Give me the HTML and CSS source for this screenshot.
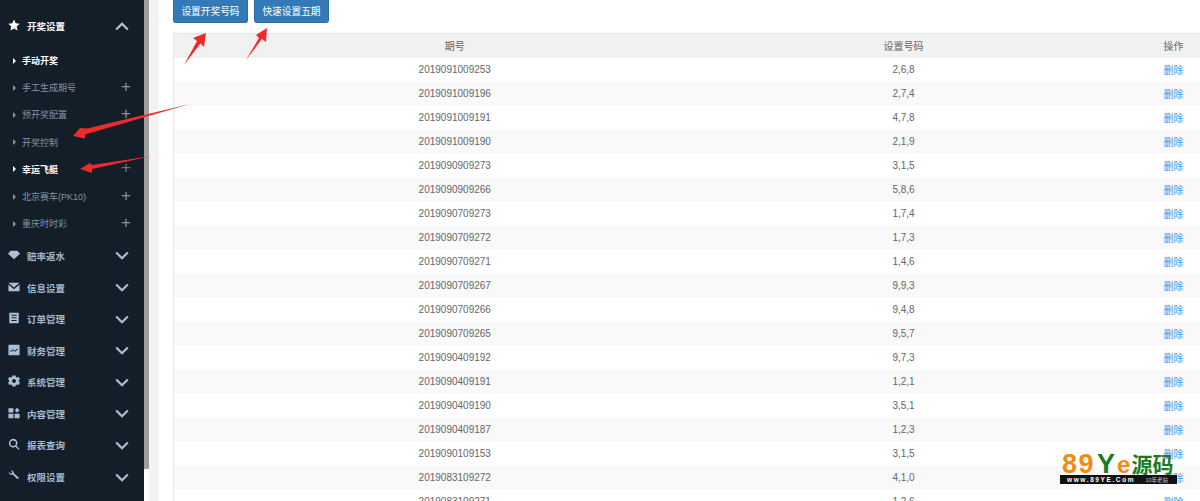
FILE: index.html
```html
<!DOCTYPE html>
<html lang="zh-CN">
<head>
<meta charset="utf-8">
<title>开奖设置</title>
<link rel="stylesheet" href="styles.css">
</head>
<body>
<div class="page">
  <aside class="sidebar">
    <div class="menu-head open first">
      <svg class="mi" viewBox="0 0 14 14"><path d="M7 .6l2 4.300 4.600.6-3.400 3.200.9 4.700L7 11.100 2.900 13.400l.9-4.700L.4 5.500 5 4.900z"/></svg>
      <span>开奖设置</span>
      <svg class="chev" viewBox="0 0 14 9"><path d="M1.200 7.500L7 1.800l5.800 5.700"/></svg>
    </div>
    <ul class="sub">
      <li class="on"><i></i><span>手动开奖</span></li>
      <li><i></i><span>手工生成期号</span><b>+</b></li>
      <li><i></i><span>预开奖配置</span><b>+</b></li>
      <li><i></i><span>开奖控制</span></li>
      <li class="on"><i></i><span>幸运飞艇</span><b class="dim">+</b></li>
      <li><i></i><span>北京赛车(PK10)</span><b>+</b></li>
      <li><i></i><span>重庆时时彩</span><b>+</b></li>
    </ul>
    <div class="menu-head"><svg class="mi" viewBox="0 0 14 14"><path d="M3 2h8l3 3.400L7 12 0 5.400z"/></svg><span>赔率返水</span><svg class="chev" viewBox="0 0 14 9"><path d="M1.200 1.500L7 7.200l5.800-5.700"/></svg></div>
    <div class="menu-head"><svg class="mi" viewBox="0 0 14 14"><path d="M.5 2h13L7 7.500zM.5 4l6.500 5.500L13.500 4v8H.5z"/></svg><span>信息设置</span><svg class="chev" viewBox="0 0 14 9"><path d="M1.200 1.500L7 7.200l5.800-5.700"/></svg></div>
    <div class="menu-head"><svg class="mi" viewBox="0 0 14 14"><path fill-rule="evenodd" d="M1.500 1h11v12h-11zM4 3.200v1.200h6V3.200zM4 6.200v1.200h6V6.200zM4 9.200v1.200h6V9.200z"/></svg><span>订单管理</span><svg class="chev" viewBox="0 0 14 9"><path d="M1.200 1.500L7 7.200l5.800-5.700"/></svg></div>
    <div class="menu-head"><svg class="mi" viewBox="0 0 14 14"><path fill-rule="evenodd" d="M.5 1h13v12H.5zM2.500 8.500l.7.700 2.300-2 2.500 1.800 3.500-3-.7-.7-2.900 2.500-2.400-1.800z"/></svg><span>财务管理</span><svg class="chev" viewBox="0 0 14 9"><path d="M1.200 1.500L7 7.200l5.800-5.700"/></svg></div>
    <div class="menu-head"><svg class="mi" viewBox="0 0 14 14"><path fill-rule="evenodd" d="M5.200.5h3.600l.4 1.800 1.500.7 1.700-.8 1.600 2.700-1.300 1.200v1.800l1.300 1.200-1.600 2.700-1.700-.8-1.500.7-.4 1.800H5.200l-.4-1.800-1.500-.7-1.700.8L0 9.100l1.300-1.200V6.100L0 4.900l1.600-2.700 1.700.8 1.500-.7zM7 4.700a2.300 2.300 0 100 4.600 2.300 2.300 0 000-4.600z"/></svg><span>系统管理</span><svg class="chev" viewBox="0 0 14 9"><path d="M1.200 1.500L7 7.200l5.800-5.700"/></svg></div>
    <div class="menu-head"><svg class="mi" viewBox="0 0 14 14"><path d="M.5 1.500h5.800v5H.5zM.5 7.800h5.800v5.200H.5zM7.700 7.800h5.800v5.200H7.700zM8 3.900L10.500.8l3 3.100-3 2.700z"/></svg><span>内容管理</span><svg class="chev" viewBox="0 0 14 9"><path d="M1.200 1.500L7 7.200l5.800-5.700"/></svg></div>
    <div class="menu-head"><svg class="mi" viewBox="0 0 14 14"><path fill-rule="evenodd" d="M6 1a5 5 0 013.900 8.100l3.500 3.400-1.100 1.100-3.400-3.500A5 5 0 116 1zm0 1.800a3.200 3.200 0 100 6.400 3.200 3.200 0 000-6.400z"/></svg><span>报表查询</span><svg class="chev" viewBox="0 0 14 9"><path d="M1.200 1.500L7 7.200l5.800-5.700"/></svg></div>
    <div class="menu-head"><svg class="mi" viewBox="0 0 14 14"><path d="M1 2.200l2.200 2 1.400-.5.300-1.500-1.900-1.500c2-.6 4 .9 3.800 3l6 5.200-1.600 1.800-5.600-5.200C3.300 6.200.7 4.400 1 2.200z"/></svg><span>权限设置</span><svg class="chev" viewBox="0 0 14 9"><path d="M1.200 1.500L7 7.200l5.800-5.700"/></svg></div>
  </aside>
  <div class="scroll"><div class="thumb"></div><div class="stripe"></div></div>
  <main class="main">
    <div class="toolbar">
      <button class="btn">设置开奖号码</button>
      <button class="btn">快速设置五期</button>
    </div>
    <table class="grid">
      <colgroup><col class="c1"><col class="c2"><col class="c3"></colgroup>
      <thead><tr><th>期号</th><th>设置号码</th><th class="act">操作</th></tr></thead>
      <tbody>
        <tr><td>2019091009253</td><td>2,6,8</td><td class="act"><a>删除</a></td></tr>
        <tr><td>2019091009196</td><td>2,7,4</td><td class="act"><a>删除</a></td></tr>
        <tr><td>2019091009191</td><td>4,7,8</td><td class="act"><a>删除</a></td></tr>
        <tr><td>2019091009190</td><td>2,1,9</td><td class="act"><a>删除</a></td></tr>
        <tr><td>2019090909273</td><td>3,1,5</td><td class="act"><a>删除</a></td></tr>
        <tr><td>2019090909266</td><td>5,8,6</td><td class="act"><a>删除</a></td></tr>
        <tr><td>2019090709273</td><td>1,7,4</td><td class="act"><a>删除</a></td></tr>
        <tr><td>2019090709272</td><td>1,7,3</td><td class="act"><a>删除</a></td></tr>
        <tr><td>2019090709271</td><td>1,4,6</td><td class="act"><a>删除</a></td></tr>
        <tr><td>2019090709267</td><td>9,9,3</td><td class="act"><a>删除</a></td></tr>
        <tr><td>2019090709266</td><td>9,4,8</td><td class="act"><a>删除</a></td></tr>
        <tr><td>2019090709265</td><td>9,5,7</td><td class="act"><a>删除</a></td></tr>
        <tr><td>2019090409192</td><td>9,7,3</td><td class="act"><a>删除</a></td></tr>
        <tr><td>2019090409191</td><td>1,2,1</td><td class="act"><a>删除</a></td></tr>
        <tr><td>2019090409190</td><td>3,5,1</td><td class="act"><a>删除</a></td></tr>
        <tr><td>2019090409187</td><td>1,2,3</td><td class="act"><a>删除</a></td></tr>
        <tr><td>2019090109153</td><td>3,1,5</td><td class="act"><a>删除</a></td></tr>
        <tr><td>2019083109272</td><td>4,1,0</td><td class="act"><a>删除</a></td></tr>
        <tr><td>2019083109271</td><td>1,2,6</td><td class="act"><a>删除</a></td></tr>
      </tbody>
    </table>
  </main>
  <svg class="arrows" viewBox="0 0 1200 501">
    <path d="M184 65L197 41 193 38 206 33 204 47 200.500 43.500z"/>
    <path d="M246 60L259 38 256 35 267 28 266 42 262 39z"/>
    <path d="M190 104L87 128.500 80 128 73 136 85 138.500 85 134.500z"/>
    <path d="M152 156L92 165 90 163 80 169 92 173 92 169z"/>
  </svg>
  <div class="mark">
    <div class="mark-top"><span class="o n">89</span><span class="g y">Y</span><span class="o e">e</span><span class="g cn">源码</span></div>
    <div class="mark-bar"><span>www.89YE.Com</span><small>10年老站</small></div>
  </div>
</div>
</body>
</html>
```

FILE: styles.css
```css
* { box-sizing: border-box; }
html, body { margin: 0; height: 100%; overflow: hidden; background: #fff; }
body { font-family: "Liberation Sans", "Noto Sans CJK SC", sans-serif; }
.page { position: relative; display: flex; width: 1200px; height: 501px; overflow: hidden; }

.sidebar { flex: 0 0 144px; height: 501px; background: #131e29; padding-top: 10px; }
.menu-head { display: flex; align-items: center; height: 31.600px; padding: 0 15px 0 8px; font-size: 9.500px; font-weight: 700; color: #a5bacd; }
.menu-head span { flex: 1; margin-left: 7px; }
.menu-head.open { color: #fff; }
.first { height: 32px; margin-bottom: 5px; }
.mi { flex: 0 0 12px; width: 12px; height: 12px; fill: #a9c1d6; margin-top: -2px; }
.open .mi { fill: #fff; margin-top: -3px; }
.chev { width: 14px; height: 9px; fill: none; stroke: #a9c1d6; stroke-width: 2.200; }
.open .chev { stroke: #b9c6d2; }
.sub { list-style: none; margin: 0 0 2.800px; padding: 0; }
.sub li { display: flex; align-items: center; height: 27.200px; padding: 0 13px 0 13px; font-size: 9px; color: #8195a8; }
.sub li span { flex: 1; margin-left: 6px; }
.sub li i { width: 0; height: 0; border-left: 3px solid #7f95a9; border-top: 3px solid transparent; border-bottom: 3px solid transparent; }
.sub li b { font: 400 17px/1 "Liberation Sans", sans-serif; color: #7f93a6; margin-top: -3px; }
.sub li.on { color: #fff; font-weight: 700; }
.sub li.on i { border-left-color: #fff; }
.sub li b.dim { color: #5f7386; }

.scroll { flex: 0 0 15px; display: flex; height: 501px; background: #fff; }
.thumb { flex: 0 0 5px; height: 469px; background: #9e9e9e; }
.stripe { flex: 1; background: #f3f3f3; }

.main { flex: 1; min-width: 0; padding-left: 14px; }
.toolbar { display: flex; gap: 6px; height: 33px; }
.btn { width: 75px; height: 23px; padding: 0; border: 1px solid #2e6da4; border-top: 0; border-radius: 0 0 3px 3px; background: #337ab7; color: #fff; font: 9.700px "Liberation Sans", "Noto Sans CJK SC", sans-serif; }

.grid { width: 1027px; table-layout: fixed; border-collapse: collapse; border-top: 1px solid #e4e4e4; border-left: 1px solid #e8e8e8; font-size: 10px; color: #666; }
.c1 { width: 562px; }
.c2 { width: 336px; }
.c3 { width: 129px; }
.grid th, .grid td { height: 24px; padding: 0; text-align: center; font-weight: 400; }
.grid th { background: #f1f1f1; }
.grid tbody tr:nth-child(even) { background: #f9f9f9; }
.grid .act { text-align: right; padding-right: 17px; }
.grid a { color: #3b9aed; }

.arrows { position: absolute; left: 0; top: 0; width: 1200px; height: 501px; fill: #ee2b2b; pointer-events: none; }

.mark { position: absolute; left: 1060px; top: 454px; width: 117px; }
.mark-top { height: 21px; padding-left: 2px; display: flex; align-items: center; font: 700 27px/21px "Liberation Sans", "Noto Sans CJK SC", sans-serif; }
.mark-top .o { color: #f28c0f; }
.mark-top .g { color: #1c7a23; }
.mark-top .n { letter-spacing: 1.500px; }
.mark-top .y { margin-left: 2px; letter-spacing: 2px; }
.mark-top .e { font-size: 24px; }
.mark-top .cn { font-size: 21px; margin-left: 1px; white-space: nowrap; }
.mark-bar { height: 9px; background: #111; color: #fff; display: flex; align-items: center; justify-content: space-between; padding: 0 9px 0 7px; font-size: 6.500px; font-weight: 700; letter-spacing: 1.600px; white-space: nowrap; }
.mark-bar small { font-size: 5.500px; font-weight: 400; letter-spacing: 0; color: #ccc; }
```
